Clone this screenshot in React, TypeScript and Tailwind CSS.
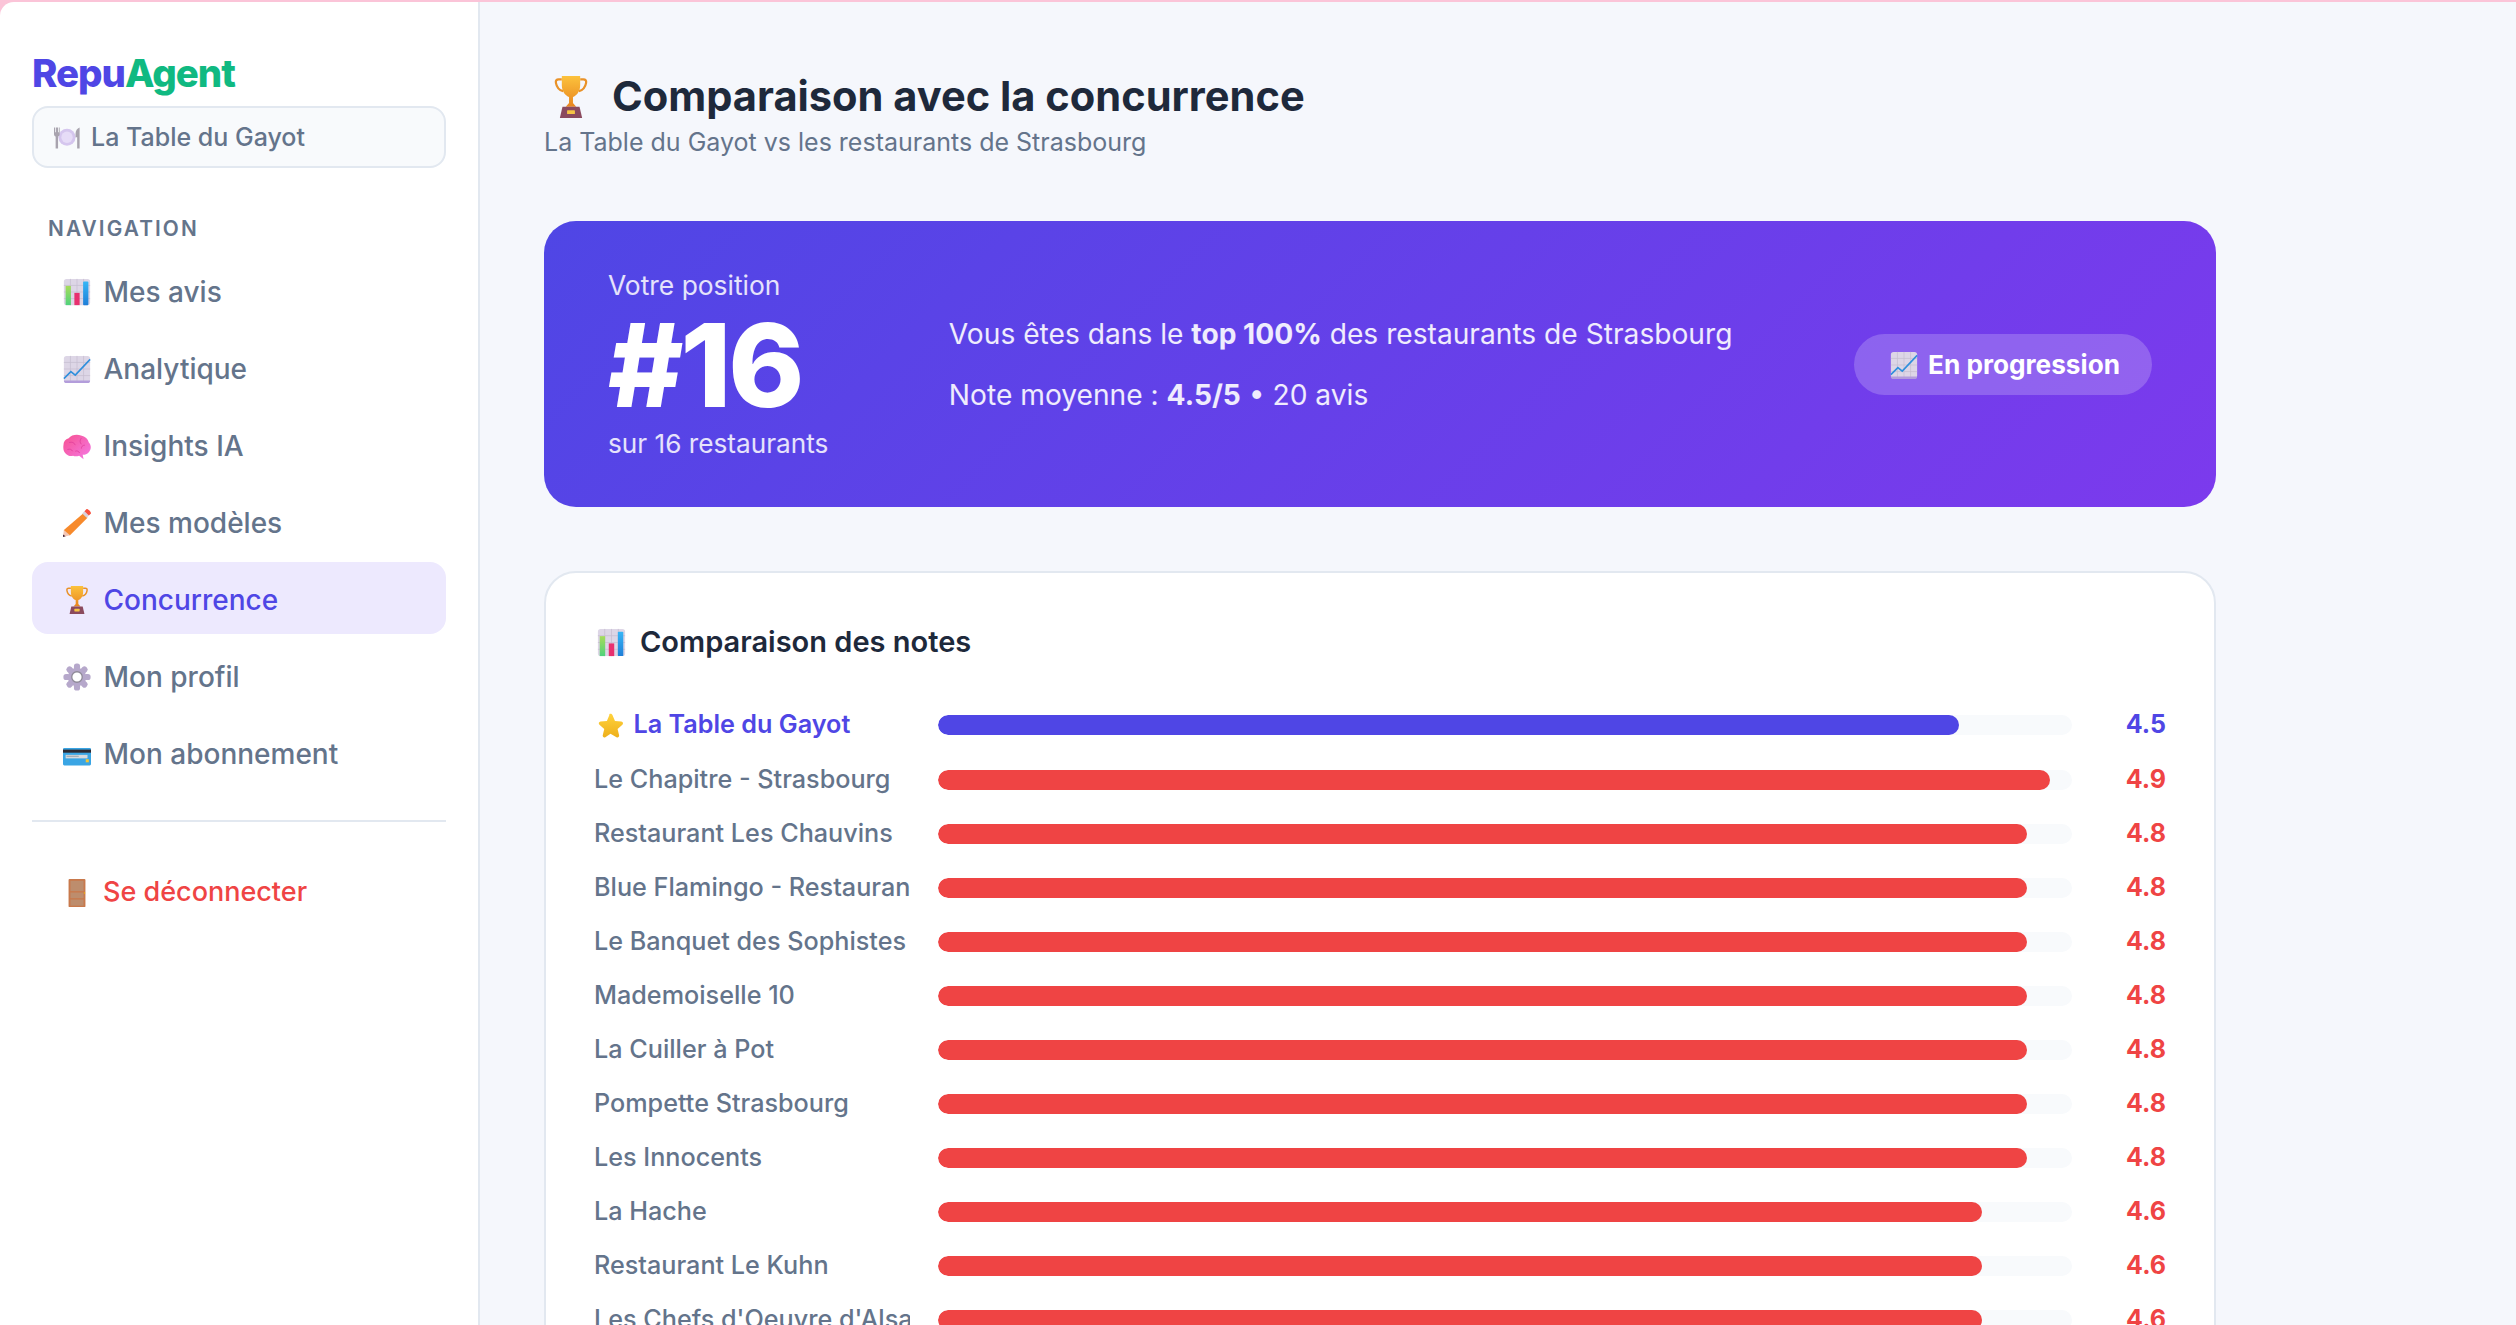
import React from "react";

type P = { className?: string };

const Grid = () => (
  <>
    <rect x="1" y="1" width="30" height="30" rx="3" fill="#ddd6e6" />
    <path d="M1 8.500h30M1 16h30M1 23.500h30M8.500 1v30M16 1v30M23.500 1v30" stroke="#c6bdd0" strokeWidth="0.8" />
  </>
);

const BarChart = ({ className }: P) => (
  <svg viewBox="0 0 32 32" className={className}>
    <Grid />
    <defs>
      <linearGradient id="g1" x1="0" y1="0" x2="0" y2="1"><stop offset="0" stopColor="#a6dc5a" /><stop offset="1" stopColor="#4fd27c" /></linearGradient>
      <linearGradient id="g2" x1="0" y1="0" x2="0" y2="1"><stop offset="0" stopColor="#37b6f6" /><stop offset="1" stopColor="#1f7fd8" /></linearGradient>
    </defs>
    <rect x="3" y="9" width="6" height="22" fill="url(#g1)" />
    <rect x="13" y="17" width="6" height="14" fill="#e8306f" />
    <rect x="23" y="4" width="6" height="27" rx="1" fill="url(#g2)" />
  </svg>
);

const LineChart = ({ className }: P) => (
  <svg viewBox="0 0 32 32" className={className}>
    <Grid />
    <path d="M1 29h30a3 3 0 0 1-3 3H4a3 3 0 0 1-3-3z" fill="#b39ddb" />
    <path d="M1 27l8-8 5 4L31 5" fill="none" stroke="#2f8fdc" strokeWidth="1.800" />
  </svg>
);

const Plate = ({ className }: P) => (
  <svg viewBox="0 0 32 32" className={className}>
    <circle cx="16" cy="15" r="10.500" fill="#d5c6ee" />
    <circle cx="16" cy="15" r="7" fill="#e6dcf7" />
    <path d="M0 3v8c0 2 1 3 2 3v15h3V14c1 0 2-1 2-3V3H6v6H5V3H2.500v6H1.500V3z" fill="#a8a3ae" />
    <path d="M31.500 3c-3 1-5 4-5 8v4h2v14h3z" fill="#a8a3ae" />
  </svg>
);

const Brain = ({ className }: P) => (
  <svg viewBox="0 0 32 32" className={className}>
    <defs>
      <linearGradient id="br" x1="0" y1="0" x2="1" y2="1"><stop offset="0" stopColor="#f7508f" /><stop offset="1" stopColor="#f47ae6" /></linearGradient>
    </defs>
    <path d="M0.500 15c0-4 2-7 6-8 3-4 10-5 14-3 5 1 8 4 9 8 3 3 3 8 0 11-2 2-4 3-7 3l1 5-5-4c-3 1-5 1-7 0-3 1-6 0-8-2-3-2-3.500-6-3-10z" fill="url(#br)" />
    <path d="M7 12c3-1 6 0 7 3M21 7c-2 2-2 5 0 7M5 20c3-1 5 0 6 2M25 15c-3 0-4 2-4 4M14 22c2-1 4 0 5 2" fill="none" stroke="#dc3a98" strokeWidth="0.800" />
  </svg>
);

const Pencil = ({ className }: P) => (
  <svg viewBox="0 0 32 32" className={className}>
    <path d="M23 5l5 5L8 30l-6-1-1-5z" fill="#f78a2c" />
    <path d="M1 24l7 6-8 2z" fill="#f3c6b4" />
    <path d="M0 29l3 2.200-3 .8z" fill="#43273b" />
    <path d="M22 5l5 5 2.500-2.500-5-5z" fill="#d8d2dc" />
    <path d="M24.500 2.500l5 5L32 5c0-2-3-5-5-5z" fill="#f8513f" />
  </svg>
);

const Trophy = ({ className }: P) => (
  <svg viewBox="0 0 32 32" className={className}>
    <defs>
      <linearGradient id="tr" x1="0" y1="0" x2="0" y2="1"><stop offset="0" stopColor="#fcc23c" /><stop offset="1" stopColor="#e8851f" /></linearGradient>
    </defs>
    <path d="M9 2.500H6.500C5 2.500 4.200 3.500 4.500 5.200c.5 3 2.500 5.500 5.500 6.300M23 2.500h2.500c1.500 0 2.300 1 2 2.700-.5 3-2.500 5.500-5.500 6.300" fill="none" stroke="#e99228" strokeWidth="1.700" />
    <path d="M9 0h14v7c0 5-3 8-5.500 9v4.500L20 23.500h-8l2.500-3V16C12 15 9 12 9 7z" fill="url(#tr)" />
    <path d="M9.500 23.500h13L24.500 32h-17z" fill="#8b4a5e" />
    <rect x="13" y="26" width="6" height="3" rx="0.500" fill="#f6c445" />
  </svg>
);

const Gear = ({ className }: P) => (
  <svg viewBox="0 0 32 32" className={className}>
    <g fill="#b6a8cb">
      <circle cx="16" cy="16" r="10.500" />
      {[0, 45, 90, 135, 180, 225, 270, 315].map((a) => (
        <rect key={a} x="12.500" y="0.500" width="7" height="8" rx="3" transform={`rotate(${a} 16 16)`} />
      ))}
    </g>
    <circle cx="16" cy="16" r="6" fill="#ffffff" />
    <circle cx="16" cy="16" r="6" fill="none" stroke="#8f8a98" strokeWidth="1.500" />
  </svg>
);

const Card = ({ className }: P) => (
  <svg viewBox="0 0 32 32" className={className}>
    <rect x="0" y="9" width="32" height="20" rx="1.500" fill="#3aa5e4" />
    <rect x="0" y="11" width="32" height="3.500" fill="#2c2a33" />
    <rect x="3" y="17" width="25" height="4" fill="#d5dadf" />
    <rect x="4" y="18" width="14" height="1.200" fill="#9aa5ad" />
    <rect x="26" y="22" width="3.500" height="3.500" fill="#f4c534" />
  </svg>
);

const Door = ({ className }: P) => (
  <svg viewBox="0 0 32 32" className={className}>
    <rect x="7" y="1" width="18" height="30" rx="1" fill="#c8794c" />
    <rect x="9" y="3" width="14" height="11" fill="#bd8d6d" />
    <rect x="9" y="15.500" width="14" height="6" fill="#bd8d6d" />
    <rect x="9" y="23" width="14" height="6.500" fill="#bd8d6d" />
    <circle cx="24" cy="16" r="0.800" fill="#f5b400" />
  </svg>
);

const Star = ({ className }: P) => (
  <svg viewBox="0 0 32 32" className={className}>
    <defs>
      <linearGradient id="st" x1="0" y1="0" x2="0" y2="1"><stop offset="0" stopColor="#ffd23c" /><stop offset="1" stopColor="#eeb01c" /></linearGradient>
    </defs>
    <path d="M16 2c1 0 1.800.6 2.300 1.700l3 7 7.500.7c2 .2 2.800 2.400 1.300 3.700l-5.700 5 1.800 7.500c.4 1.900-1.500 3.200-3.100 2.200L16 25.900 9.900 29.800c-1.600 1-3.500-.3-3.100-2.200l1.800-7.500-5.700-5c-1.500-1.300-.7-3.500 1.300-3.700l7.500-.7 3-7C14.200 2.600 15 2 16 2z" fill="url(#st)" />
  </svg>
);

const nav = [
  { label: "Mes avis", Icon: BarChart },
  { label: "Analytique", Icon: LineChart },
  { label: "Insights IA", Icon: Brain },
  { label: "Mes modèles", Icon: Pencil },
  { label: "Concurrence", Icon: Trophy, active: true },
  { label: "Mon profil", Icon: Gear },
  { label: "Mon abonnement", Icon: Card },
];

const rows = [
  { name: "Le Chapitre - Strasbourg", v: 4.9 },
  { name: "Restaurant Les Chauvins", v: 4.8 },
  { name: "Blue Flamingo - Restaurant", v: 4.8 },
  { name: "Le Banquet des Sophistes", v: 4.8 },
  { name: "Mademoiselle 10", v: 4.8 },
  { name: "La Cuiller à Pot", v: 4.8 },
  { name: "Pompette Strasbourg", v: 4.8 },
  { name: "Les Innocents", v: 4.8 },
  { name: "La Hache", v: 4.6 },
  { name: "Restaurant Le Kuhn", v: 4.6 },
  { name: "Les Chefs d'Oeuvre d'Alsace", v: 4.6 },
];

export default function App() {
  return (
    <div className="h-screen overflow-hidden bg-[#fbc4d8] pt-[2px] font-['Inter',sans-serif]">
      <div className="flex h-full">
        <aside className="w-[480px] shrink-0 rounded-tl-[14px] border-r-[2px] border-[#e2e8f0] bg-white px-[32px] pt-[48px]">
          <div className="text-[38.4px] leading-[46px] font-extrabold tracking-[-1px]">
            <span className="text-[#4f46e5]">Repu</span>
            <span className="text-[#10b981]">Agent</span>
          </div>
          <div className="mt-[10px] flex h-[62px] items-center gap-[11px] rounded-[16px] border-[2px] border-[#e2e8f0] bg-[#f8fafc] pt-[2px] pl-[20px] text-[25px] font-medium text-[#64748b]">
            <Plate className="h-[26px] w-[26px]" />
            <span>La Table du Gayot</span>
          </div>
          <div className="mt-[48px] pl-[16px] text-[20.8px] leading-[26px] font-semibold tracking-[2.1px] text-[#64748b]">NAVIGATION</div>
          <nav className="mt-[12px] flex flex-col gap-[5px]">
            {nav.map(({ label, Icon, active }) => (
              <div
                key={label}
                className={`flex h-[72px] items-center gap-[12.5px] rounded-[16px] pt-[4px] pl-[31px] text-[28px] font-medium ${
                  active ? "bg-[#ede9fe] text-[#4f46e5]" : "text-[#64748b]"
                }`}
              >
                <Icon className="h-[28px] w-[28px]" />
                <span>{label}</span>
              </div>
            ))}
          </nav>
          <div className="mt-[32px] border-t-[2px] border-[#e2e8f0]" />
          <div className="mt-[34.5px] flex h-[72px] items-center gap-[11px] pl-[30px] text-[27px] font-medium text-[#ef4444]">
            <Door className="h-[30px] w-[30px]" />
            <span>Se déconnecter</span>
          </div>
        </aside>
        <main className="min-w-0 flex-1 bg-[#f5f7fc] pl-[64px] pt-[66px]">
          <div className="w-[1672px]">
            <h1 className="flex h-[57px] items-center gap-[20px] pl-[6px] text-[41.6px] font-bold text-[#1e293b]">
              <Trophy className="h-[42px] w-[42px]" />
              <span>Comparaison avec la concurrence</span>
            </h1>
            <p className="pt-[2px] text-[25px] leading-[30px] text-[#64748b]">La Table du Gayot vs les restaurants de Strasbourg</p>
            <section className="mt-[64px] flex h-[286px] items-center rounded-[32px] bg-[linear-gradient(135deg,#4f46e5,#7c3aed)] px-[64px] text-white">
              <div>
                <div className="text-[26.4px] leading-[30px] text-white/85">Votre position</div>
                <div className="mt-[8px] text-[115.2px] leading-[115px] font-extrabold tracking-[-3px]">#16</div>
                <div className="mt-[6px] text-[26.2px] leading-[30px] text-white/85">sur 16 restaurants</div>
              </div>
              <div className="ml-[120.5px] text-[28.16px] leading-[34px] whitespace-nowrap text-white/90">
                <p>
                  Vous êtes dans le <strong className="font-bold">top 100%</strong> des restaurants de Strasbourg
                </p>
                <p className="mt-[27px]">
                  Note moyenne : <strong className="font-bold">4.5/5</strong> • 20 avis
                </p>
              </div>
              <div className="ml-auto flex h-[61px] items-center gap-[10px] rounded-full bg-white/20 pt-[2px] pr-[32px] pl-[36px] text-[26.2px] font-bold">
                <LineChart className="h-[28px] w-[28px]" />
                <span>En progression</span>
              </div>
            </section>
            <section className="mt-[64px] rounded-[32px] border-[2px] border-[#e2e8f0] bg-white px-[48px] pt-[49px] pb-[48px]">
              <h2 className="flex h-[40px] items-center gap-[14px] pl-[3px] text-[29px] font-semibold text-[#1e293b]">
                <BarChart className="h-[29px] w-[29px]" />
                <span>Comparaison des notes</span>
              </h2>
              <div className="mt-[45.5px] flex flex-col gap-[20px]">
                <div className="flex h-[35px] items-center gap-[27.6px]">
                  <div className="flex w-[316px] shrink-0 items-center gap-[9.5px] overflow-hidden pl-[3px] text-[25.2px] font-semibold whitespace-nowrap text-[#4f46e5]">
                    <Star className="h-[27px] w-[27px]" />
                    <span>La Table du Gayot</span>
                  </div>
                  <div className="h-[20px] flex-1 overflow-hidden rounded-full bg-[#f8fafc]">
                    <div className="h-full rounded-full bg-[#4f46e5]" style={{ width: "90%" }} />
                  </div>
                  <div className="w-[66px] shrink-0 text-right text-[25px] font-bold text-[#4f46e5]">4.5</div>
                </div>
                {rows.map((r) => (
                  <div key={r.name} className="flex h-[34px] items-center gap-[27.6px]">
                    <div className="w-[316px] shrink-0 overflow-hidden text-[25.2px] font-medium whitespace-nowrap text-[#64748b]">{r.name}</div>
                    <div className="h-[20px] flex-1 overflow-hidden rounded-full bg-[#f8fafc]">
                      <div className="h-full rounded-full bg-[#ef4444]" style={{ width: `${(r.v / 5) * 100}%` }} />
                    </div>
                    <div className="w-[66px] shrink-0 text-right text-[25px] font-bold text-[#ef4444]">{r.v.toFixed(1)}</div>
                  </div>
                ))}
              </div>
            </section>
          </div>
        </main>
      </div>
    </div>
  );
}
